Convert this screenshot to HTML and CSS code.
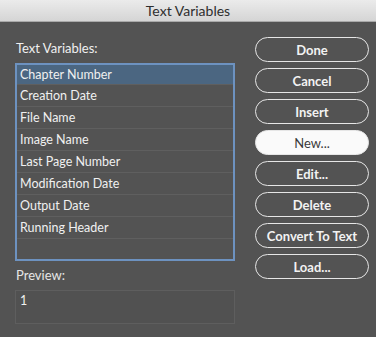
FILE: index.html
```html
<!DOCTYPE html>
<html lang="en">
<head>
  <meta charset="UTF-8" />
  <meta name="viewport" content="width=device-width, initial-scale=1.0" />
  <title>Text Variables</title>
  <link rel="stylesheet" href="styles.css">
</head>
<body>
  <div class="titlebar">Text Variables</div>
  <div class="dialog">
    <div class="left">
      <div class="label label-top">Text Variables:</div>
      <ul class="list">
        <li class="selected">Chapter Number</li>
        <li>Creation Date</li>
        <li>File Name</li>
        <li>Image Name</li>
        <li>Last Page Number</li>
        <li>Modification Date</li>
        <li>Output Date</li>
        <li>Running Header</li>
      </ul>
      <div class="label label-preview">Preview:</div>
      <div class="preview">1</div>
    </div>
    <div class="buttons">
      <button class="btn">Done</button>
      <button class="btn">Cancel</button>
      <button class="btn">Insert</button>
      <button class="btn btn-default">New...</button>
      <button class="btn">Edit...</button>
      <button class="btn">Delete</button>
      <button class="btn">Convert To Text</button>
      <button class="btn">Load...</button>
    </div>
  </div>
</body>
</html>
```

FILE: styles.css
```css
body {
  margin: 0;
  padding: 0;
  font-family: Lato, 'Open Sans', sans-serif;
  background: #535353;
  color: #f0f0f0;
  height: 337px;
  overflow: hidden;
}
.titlebar {
  height: 21px;
  line-height: 21px;
  text-align: center;
  font-size: 14px;
  color: #2e2e2e;
  background: linear-gradient(#ebebeb, #d5d5d5);
  border-bottom: 1px solid #a9a9a9;
}
.dialog {
  display: flex;
  gap: 20px;
  padding: 0 7px 0 15px;
}
.left {
  width: 220px;
  display: flex;
  flex-direction: column;
}
.label {
  font-size: 13px;
  line-height: 16px;
  padding-left: 1px;
}
.label-top {
  margin-top: 18px;
  margin-bottom: 7px;
}
.label-preview {
  margin-top: 6px;
  margin-bottom: 7px;
  color: #e6e6e6;
}
.list {
  list-style: none;
  margin: 0;
  padding: 0;
  height: 194px;
  border: 2px solid #6d92c0;
  font-size: 12.5px;
}
.list li {
  height: 21px;
  line-height: 21px;
  padding-left: 3px;
  border-bottom: 1px solid #5f5f5f;
}
.list li.selected {
  height: 19px;
  line-height: 19px;
  background: #4b6681;
}
.preview {
  height: 34px;
  box-sizing: border-box;
  border: 1px solid #5e5e5e;
  background: #515151;
  font-size: 12.5px;
  line-height: 16px;
  padding: 2px 4px;
}
.buttons {
  width: 114px;
  padding-top: 15px;
  display: flex;
  flex-direction: column;
  gap: 6px;
}
.btn {
  height: 25px;
  padding: 0;
  border: 1.5px solid #e6e6e6;
  border-radius: 13px;
  background: transparent;
  color: #f2f2f2;
  font-family: Lato, 'Open Sans', sans-serif;
  font-size: 13px;
  font-weight: 700;
  cursor: pointer;
}
.btn-default {
  background: #fafafa;
  color: #3a3a3a;
  font-weight: 400;
}
```
